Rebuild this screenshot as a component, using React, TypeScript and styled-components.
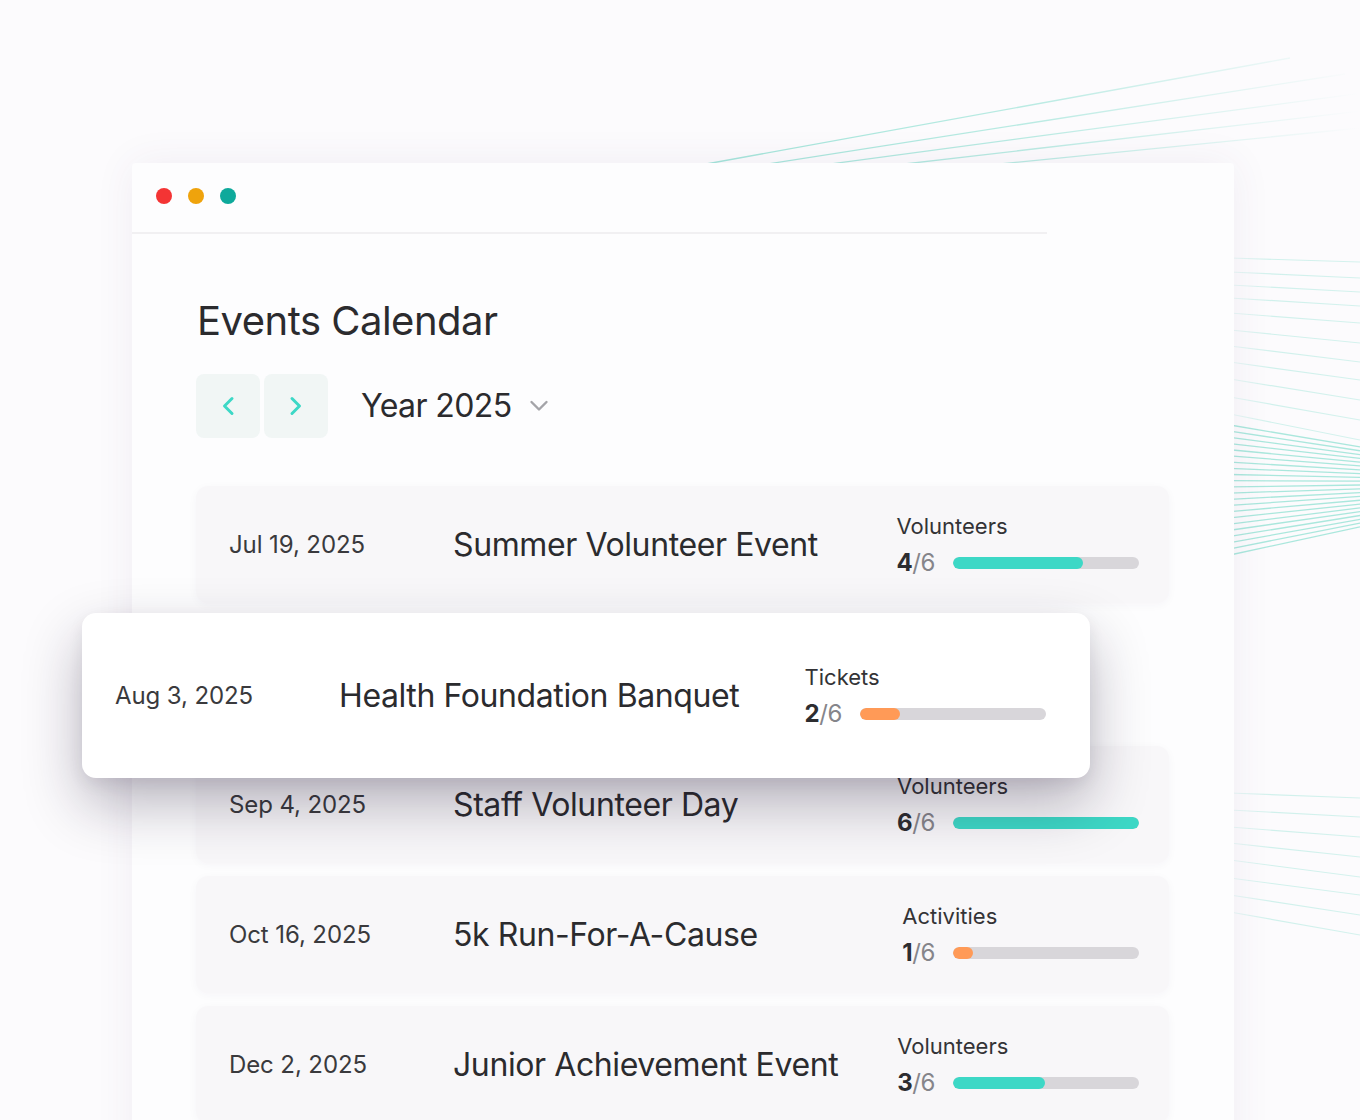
import React from "react";
import styled, { createGlobalStyle } from "styled-components";

const GlobalStyle = createGlobalStyle`
  html, body {
    margin: 0;
    padding: 0;
    background: #fcfbfd;
    overflow: hidden;
  }
  body {
    font-family: Inter, "Noto Sans", "Liberation Sans", sans-serif;
    color: #2d2d30;
    -webkit-font-smoothing: antialiased;
  }
`;

const Stage = styled.div`
  display: grid;
  width: 1360px;
  height: 1120px;
  overflow: hidden;
  & > * {
    grid-area: 1 / 1;
  }
`;

const Decor = styled.svg`
  display: block;
  width: 1360px;
  height: 1120px;
`;

const AppWindow = styled.main`
  align-self: start;
  justify-self: start;
  margin: 163px 0 0 132px;
  width: 1102px;
  min-height: 1000px;
  background: #fdfdfe;
  border-radius: 4px 4px 0 0;
  box-shadow: 0 0 40px rgba(80, 60, 110, 0.07);
  position: relative;
`;

const TitleBar = styled.div`
  display: flex;
  gap: 16px;
  height: 69px;
  padding: 25px 24px 0;
  box-sizing: border-box;
`;

const Dot = styled.span<{ $c: string }>`
  width: 16px;
  height: 16px;
  border-radius: 50%;
  background: ${(p) => p.$c};
`;

const Divider = styled.div`
  width: 915px;
  height: 2px;
  background: #f1f0f2;
`;

const Body = styled.div`
  display: flex;
  flex-direction: column;
  padding: 63px 65px 0 64px;
`;

const Heading = styled.h1`
  margin: 0 0 0 1px;
  font-size: 40px;
  line-height: 48px;
  font-weight: 400;
  letter-spacing: -0.5px;
  color: #2b2b2e;
`;

const Toolbar = styled.div`
  display: flex;
  align-items: center;
  height: 64px;
  margin-top: 29px;
`;

const NavGroup = styled.div`
  display: flex;
  gap: 4px;
`;

const NavButton = styled.button`
  width: 64px;
  height: 64px;
  border: none;
  border-radius: 8px;
  background: #f1f6f5;
  display: grid;
  place-items: center;
  padding: 0;
  cursor: pointer;
`;

const YearSelect = styled.div`
  display: flex;
  align-items: center;
  gap: 17px;
  margin-left: 33px;
  font-size: 32px;
  line-height: 1;
  letter-spacing: -0.6px;
  color: #2b2b2e;
`;

const List = styled.div`
  display: flex;
  flex-direction: column;
  gap: 13px;
  margin-top: 48px;
`;

const Row = styled.div`
  display: flex;
  align-items: center;
  height: 117px;
  padding: 0 30px 0 33px;
  box-sizing: border-box;
  background: #f8f7f9;
  border-radius: 12px;
  box-shadow: 0 2px 10px rgba(60, 40, 90, 0.035);
`;

const Slot = styled.div`
  position: relative;
  height: 117px;
`;

const LiftedRow = styled(Row)`
  position: absolute;
  left: -114px;
  top: -3px;
  width: 1008px;
  height: 165px;
  padding: 0 44px 0 33px;
  background: #ffffff;
  border-radius: 14px;
  box-shadow: 0 26px 58px rgba(25, 15, 45, 0.3), 0 6px 16px rgba(25, 15, 45, 0.07);
  z-index: 2;
`;

const DateCell = styled.span`
  flex: none;
  width: 224px;
  font-size: 24px;
  line-height: 1;
  letter-spacing: -0.1px;
  color: #3a3a3d;
`;

const Name = styled.span`
  flex: 1;
  font-size: 32px;
  line-height: 1;
  letter-spacing: -0.4px;
  color: #2b2b2e;
`;

const Metric = styled.div`
  display: grid;
  grid-template-columns: auto 186px;
  column-gap: 18px;
  row-gap: 14px;
  align-items: center;
`;

const MetricLabel = styled.span`
  grid-column: 1 / -1;
  font-size: 22px;
  line-height: 1;
  color: #333336;
`;

const Count = styled.span`
  font-size: 24px;
  line-height: 1;
  letter-spacing: -0.4px;
  color: #85858a;
  & > b {
    font-weight: 700;
    color: #2d2d30;
  }
`;

const Track = styled.div`
  height: 12px;
  border-radius: 6px;
  background: #d8d6da;
  overflow: hidden;
`;

const Fill = styled.div<{ $tone: "teal" | "orange" }>`
  height: 100%;
  border-radius: 6px;
  background: ${(p) => (p.$tone === "teal" ? "#3dd8c6" : "#ff9a57")};
`;

type EventItem = {
  date: string;
  name: string;
  label: string;
  done: number;
  pct: number;
  tone: "teal" | "orange";
};

const events: EventItem[] = [
  { date: "Jul 19, 2025", name: "Summer Volunteer Event", label: "Volunteers", done: 4, pct: 70, tone: "teal" },
  { date: "Aug 3, 2025", name: "Health Foundation Banquet", label: "Tickets", done: 2, pct: 21.5, tone: "orange" },
  { date: "Sep 4, 2025", name: "Staff Volunteer Day", label: "Volunteers", done: 6, pct: 100, tone: "teal" },
  { date: "Oct 16, 2025", name: "5k Run-For-A-Cause", label: "Activities", done: 1, pct: 11, tone: "orange" },
  { date: "Dec 2, 2025", name: "Junior Achievement Event", label: "Volunteers", done: 3, pct: 49.5, tone: "teal" },
];

function RowContent({ e }: { e: EventItem }) {
  return (
    <>
      <DateCell>{e.date}</DateCell>
      <Name>{e.name}</Name>
      <Metric>
        <MetricLabel>{e.label}</MetricLabel>
        <Count>
          <b>{e.done}</b>/6
        </Count>
        <Track>
          <Fill $tone={e.tone} style={{ width: `${e.pct}%` }} />
        </Track>
      </Metric>
    </>
  );
}

const ChevronLeft = () => (
  <svg width="14" height="20" viewBox="0 0 14 20" fill="none">
    <polyline points="11,2.5 3.5,10 11,17.5" stroke="#3dd8c6" strokeWidth="3" strokeLinecap="round" strokeLinejoin="round" />
  </svg>
);

const ChevronRight = () => (
  <svg width="14" height="20" viewBox="0 0 14 20" fill="none">
    <polyline points="3,2.5 10.5,10 3,17.5" stroke="#3dd8c6" strokeWidth="3" strokeLinecap="round" strokeLinejoin="round" />
  </svg>
);

const ChevronDown = () => (
  <svg width="20" height="14" viewBox="0 0 20 14" fill="none">
    <polyline points="2.5,3 10,10.5 17.5,3" stroke="#a4a4a8" strokeWidth="2.4" strokeLinecap="round" strokeLinejoin="round" />
  </svg>
);

function Lines() {
  const top = [
    [640, 176, 1290, 58],
    [690, 176, 1345, 74],
    [755, 174, 1370, 92],
    [835, 172, 1370, 110],
    [940, 170, 1370, 127],
  ];
  const sparseTop = [
    [258, 262],
    [272, 278],
    [285, 292],
    [298, 306],
    [313, 323],
    [330, 343],
    [346, 362],
    [362, 380],
    [379, 400],
    [397, 420],
    [414, 440],
  ];
  const dense: number[][] = [];
  for (let i = 0; i < 22; i++) {
    const yL = 425 + i * (130 / 21);
    const fx = 1560;
    const fy = 482;
    const t = (1360 - 1235) / (fx - 1235);
    const yR = yL + (fy - yL) * t;
    dense.push([yL, yR]);
  }
  const lower = [
    [793, 798],
    [810, 817],
    [827, 837],
    [843, 857],
    [860, 877],
    [878, 895],
    [895, 915],
    [912, 935],
  ];
  return (
    <Decor viewBox="0 0 1360 1120" aria-hidden="true">
      <defs>
        <linearGradient id="fadeTop" gradientUnits="userSpaceOnUse" x1="640" y1="0" x2="1360" y2="0">
          <stop offset="0" stopColor="#8fe0d2" stopOpacity="0.85" />
          <stop offset="0.55" stopColor="#8fe0d2" stopOpacity="0.6" />
          <stop offset="1" stopColor="#8fe0d2" stopOpacity="0" />
        </linearGradient>
        <linearGradient id="fadeSide" gradientUnits="userSpaceOnUse" x1="1235" y1="0" x2="1360" y2="0">
          <stop offset="0" stopColor="#9ae4d7" stopOpacity="0.2" />
          <stop offset="0.3" stopColor="#9ae4d7" stopOpacity="0.45" />
          <stop offset="1" stopColor="#9ae4d7" stopOpacity="0.4" />
        </linearGradient>
      </defs>
      {top.map(([x1, y1, x2, y2], i) => (
        <line key={"t" + i} x1={x1} y1={y1} x2={x2} y2={y2} stroke="url(#fadeTop)" strokeWidth="1.3" />
      ))}
      {sparseTop.map(([a, b], i) => (
        <line key={"s" + i} x1={1230} y1={a} x2={1360} y2={b} stroke="url(#fadeSide)" strokeWidth="1.2" />
      ))}
      {dense.map(([a, b], i) => (
        <line key={"d" + i} x1={1230} y1={a} x2={1360} y2={b} stroke="#8fe0d2" strokeOpacity="0.75" strokeWidth="1.3" />
      ))}
      {lower.map(([a, b], i) => (
        <line key={"l" + i} x1={1230} y1={a} x2={1360} y2={b} stroke="url(#fadeSide)" strokeWidth="1.2" />
      ))}
    </Decor>
  );
}

export default function App() {
  return (
    <>
      <GlobalStyle />
      <Stage>
        <Lines />
        <AppWindow>
          <TitleBar>
            <Dot $c="#f43434" />
            <Dot $c="#efa30c" />
            <Dot $c="#0ea99b" />
          </TitleBar>
          <Divider />
          <Body>
            <Heading>Events Calendar</Heading>
            <Toolbar>
              <NavGroup>
                <NavButton aria-label="Previous">
                  <ChevronLeft />
                </NavButton>
                <NavButton aria-label="Next">
                  <ChevronRight />
                </NavButton>
              </NavGroup>
              <YearSelect>
                <span>Year 2025</span>
                <ChevronDown />
              </YearSelect>
            </Toolbar>
            <List>
              {events.map((e, i) =>
                i === 1 ? (
                  <Slot key={e.name}>
                    <LiftedRow>
                      <RowContent e={e} />
                    </LiftedRow>
                  </Slot>
                ) : (
                  <Row key={e.name}>
                    <RowContent e={e} />
                  </Row>
                )
              )}
            </List>
          </Body>
        </AppWindow>
      </Stage>
    </>
  );
}
